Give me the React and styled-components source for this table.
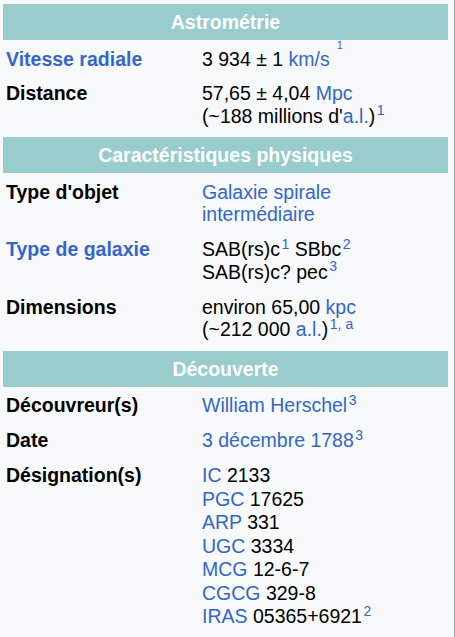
import React from 'react';
import styled, {createGlobalStyle} from 'styled-components';

const Global = createGlobalStyle`
  html, body {
    margin: 0;
    padding: 0;
    background: #f8f9fa;
  }
`;

const Box = styled.div`
  width: 455px;
  min-height: 637px;
  box-sizing: border-box;
  padding: 4px 6px 0 3px;
  background: #f8f9fa;
  border-right: 1px solid #a2a9b1;
  font-family: "Liberation Sans", Arial, sans-serif;
  font-size: 19.5px;
  line-height: 22.6px;
  color: #000;
  display: flex;
  flex-direction: column;
  gap: 3px;
`;

const Header = styled.div`
  height: 36px;
  display: flex;
  align-items: center;
  justify-content: center;
  background: #99cccc;
  color: #fff;
  font-weight: bold;
`;

const Body = styled.div`
  display: flex;
  flex-direction: column;
  gap: 3px;
  padding: 0 0 2px;
`;

const Row = styled.div`
  display: grid;
  grid-template-columns: 199px 1fr;
  padding: 4.5px 0 4.8px;
`;

const Label = styled.div`
  padding-left: 3px;
  font-weight: bold;
  color: ${(p) => (p.link ? '#3366cc' : '#000')};
`;

const Value = styled.div`
  color: #000;
`;

const Line = styled.div`
  line-height: ${(p) => (p.tall ? '23.5px' : 'inherit')};
`;

const A = styled.span`
  color: #3366cc;
`;

const Sup = styled.sup`
  position: relative;
  font-size: ${(p) => (p.high ? '11px' : '14px')};
  line-height: 0;
  color: #3366cc;
  vertical-align: baseline;
  top: ${(p) => (p.high ? '-17px' : '-7.5px')};
  margin-left: ${(p) => (p.high ? '7px' : '1.5px')};
`;

const Section = ({title, children}) => (
  <>
    <Header>{title}</Header>
    <Body>{children}</Body>
  </>
);

const designations = [
  ['IC', '2133'],
  ['PGC', '17625'],
  ['ARP', '331'],
  ['UGC', '3334'],
  ['MCG', '12-6-7'],
  ['CGCG', '329-8'],
  ['IRAS', '05365+6921'],
];

const App = () => (
  <Box>
    <Global />
    <Section title="Astrométrie">
      <Row>
        <Label link>Vitesse radiale</Label>
        <Value>
          3 934 ± 1 <A>km/s</A>
          <Sup high>1</Sup>
        </Value>
      </Row>
      <Row>
        <Label>Distance</Label>
        <Value>
          <Line>57,65 ± 4,04 <A>Mpc</A></Line>
          <Line>(~188 millions d'<A>a.l.</A>)<Sup>1</Sup></Line>
        </Value>
      </Row>
    </Section>
    <Section title="Caractéristiques physiques">
      <Row>
        <Label>Type d'objet</Label>
        <Value>
          <Line><A>Galaxie spirale</A></Line>
          <Line><A>intermédiaire</A></Line>
        </Value>
      </Row>
      <Row>
        <Label link>Type de galaxie</Label>
        <Value>
          <Line>SAB(rs)c<Sup>1</Sup> SBbc<Sup>2</Sup></Line>
          <Line>SAB(rs)c? pec<Sup>3</Sup></Line>
        </Value>
      </Row>
      <Row>
        <Label>Dimensions</Label>
        <Value>
          <Line>environ 65,00 <A>kpc</A></Line>
          <Line>(~212 000 <A>a.l.</A>)<Sup>1, a</Sup></Line>
        </Value>
      </Row>
    </Section>
    <Section title="Découverte">
      <Row>
        <Label>Découvreur(s)</Label>
        <Value>
          <A>William Herschel</A><Sup>3</Sup>
        </Value>
      </Row>
      <Row>
        <Label>Date</Label>
        <Value>
          <A>3 décembre 1788</A><Sup>3</Sup>
        </Value>
      </Row>
      <Row>
        <Label>Désignation(s)</Label>
        <Value>
          {designations.map(([cat, num], i) => (
            <Line tall key={cat}>
              <A>{cat}</A> {num}
              {i === designations.length - 1 && <Sup>2</Sup>}
            </Line>
          ))}
        </Value>
      </Row>
    </Section>
  </Box>
);

export default App;
